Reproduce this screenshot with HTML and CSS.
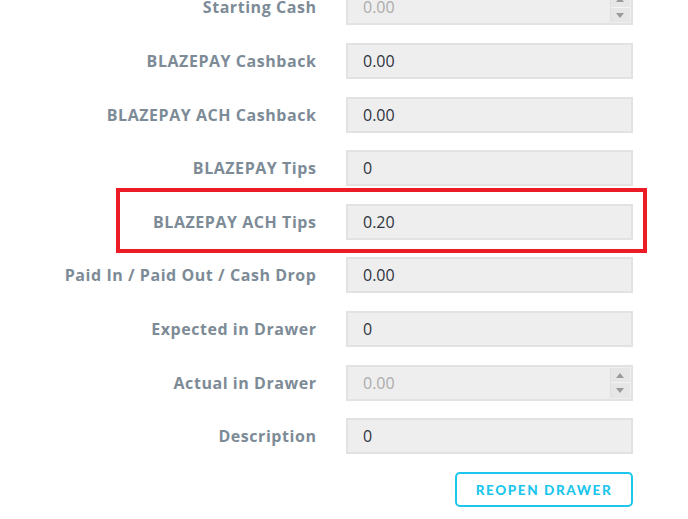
FILE: index.html
```html
<!DOCTYPE html>
<html lang="en">
<head>
  <meta charset="UTF-8">
  <meta name="viewport" content="width=device-width, initial-scale=1.0">
  <title>Close Drawer</title>
  <link rel="stylesheet" href="styles.css">
</head>
<body>
  <div class="drawer-form">
    <div class="row">
      <label>Starting Cash</label>
      <div class="field disabled">0.00<span class="spin"><i class="up"></i><i class="down"></i></span></div>
    </div>
    <div class="row">
      <label>BLAZEPAY Cashback</label>
      <div class="field">0.00</div>
    </div>
    <div class="row">
      <label>BLAZEPAY ACH Cashback</label>
      <div class="field">0.00</div>
    </div>
    <div class="row">
      <label>BLAZEPAY Tips</label>
      <div class="field">0</div>
    </div>
    <div class="row highlighted">
      <label>BLAZEPAY ACH Tips</label>
      <div class="field">0.20</div>
      <div class="marker"></div>
    </div>
    <div class="row">
      <label>Paid In / Paid Out / Cash Drop</label>
      <div class="field">0.00</div>
    </div>
    <div class="row">
      <label>Expected in Drawer</label>
      <div class="field">0</div>
    </div>
    <div class="row">
      <label>Actual in Drawer</label>
      <div class="field disabled">0.00<span class="spin"><i class="up"></i><i class="down"></i></span></div>
    </div>
    <div class="row">
      <label>Description</label>
      <div class="field">0</div>
    </div>
    <div class="actions">
      <button class="reopen">REOPEN DRAWER</button>
    </div>
  </div>
</body>
</html>
```

FILE: styles.css
```css
body{
  margin: 0;
  background-color: #fff;
  font-family: "Open Sans", "DejaVu Sans", sans-serif;
}
.drawer-form{
  display: flex;
  flex-direction: column;
  gap: 17.6px;
  margin-top: -10.6px;
  width: 633px;
}
.row{
  position: relative;
  display: grid;
  grid-template-columns: 316px 287px;
  column-gap: 30px;
  align-items: center;
  height: 36px;
}
.row label{
  text-align: right;
  font-size: 16px;
  font-weight: 700;
  color: #7d8b97;
  letter-spacing: 0.55px;
  margin-right: -0.5px;
}
.field{
  position: relative;
  box-sizing: border-box;
  height: 36px;
  background-color: #eeeeee;
  border: 2px solid #e2e2e2;
  padding: 0 15px;
  font-size: 16px;
  line-height: 32px;
  color: #2f3540;
}
.field.disabled{
  color: #acacac;
}
.spin{
  position: absolute;
  right: 1px;
  top: 1px;
  width: 19px;
  height: 30px;
  display: flex;
  flex-direction: column;
  border-left: 1px solid #e0e0e0;
  background-color: #e6e6e6;
}
.spin i{
  flex: 1;
  position: relative;
}
.spin .up{
  border-bottom: 1px solid #f4f4f4;
}
.spin i::after{
  content: "";
  position: absolute;
  left: 5px;
  top: 5px;
  border-left: 4px solid transparent;
  border-right: 4px solid transparent;
}
.spin .up::after{
  border-bottom: 5px solid #9a9a9a;
}
.spin .down::after{
  border-top: 5px solid #9a9a9a;
}
.marker{
  position: absolute;
  left: 116px;
  top: -16px;
  width: 531px;
  height: 65px;
  box-sizing: border-box;
  border: 4px solid #ec1c27;
  pointer-events: none;
}
.actions{
  display: flex;
  justify-content: flex-end;
  margin-top: 0.4px;
}
.reopen{
  width: 178px;
  height: 35px;
  background-color: #fff;
  border: 2px solid #1cc6ec;
  border-radius: 5px;
  color: #1cc6ec;
  font-family: "Lato", "Open Sans", sans-serif;
  font-weight: 900;
  font-size: 13.5px;
  letter-spacing: 1.6px;
  cursor: pointer;
}
```
